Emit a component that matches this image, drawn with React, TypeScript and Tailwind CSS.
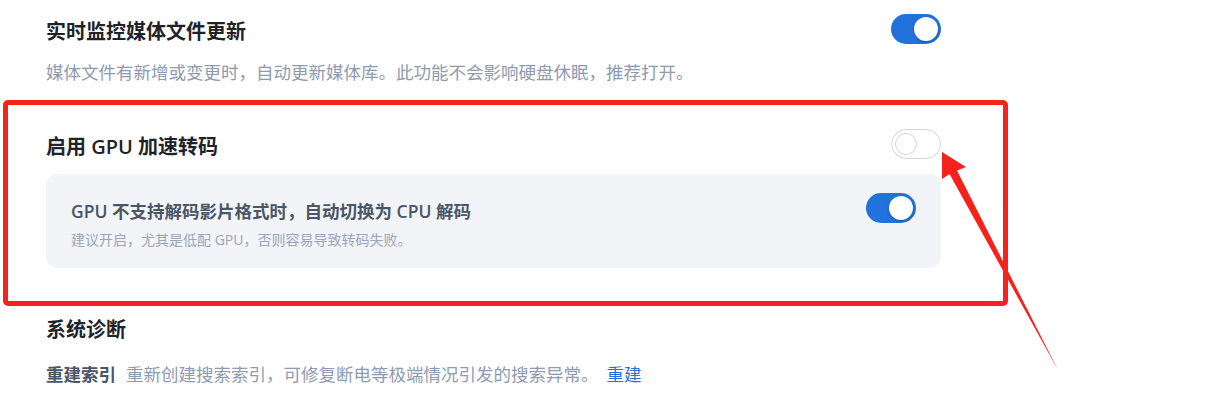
import React from "react";

const font = { fontFamily: '"Open Sans", "Noto Sans CJK SC", sans-serif' };

function Toggle({ on }: { on: boolean }) {
  if (on) {
    return (
      <div className="flex h-[30px] w-[50px] shrink-0 items-center justify-end rounded-full bg-[#2272dc] pr-[3px]">
        <div className="h-[24px] w-[24px] rounded-full bg-white shadow-[0_1px_3px_rgba(0,0,0,0.25)]" />
      </div>
    );
  }
  return (
    <div className="flex h-[30px] w-[50px] shrink-0 items-center rounded-full border border-[#cfd6e0] bg-white pl-[3px]">
      <div className="h-[22px] w-[22px] rounded-full border border-[#cfd6e0] bg-white" />
    </div>
  );
}

export default function App() {
  return (
    <div className="relative h-[411px] w-[1207px] overflow-hidden bg-white" style={font}>
      <div className="flex w-[941px] flex-col pl-[46px] pt-[14px]">
        {/* Section 1 */}
        <div className="flex h-[30px] items-center justify-between">
          <div className="pt-[5px] text-[20px] font-semibold leading-[28px] text-[#1f2329]">实时监控媒体文件更新</div>
          <Toggle on />
        </div>
        <div className="mt-[15px] text-[17.5px] leading-[26px] text-[#8e9aae]">
          媒体文件有新增或变更时，自动更新媒体库。此功能不会影响硬盘休眠，推荐打开。
        </div>

        {/* Section 2 */}
        <div className="mt-[44px] flex h-[30px] items-center justify-between">
          <div className="pt-[5px] text-[20px] font-semibold leading-[28px] text-[#1f2329]">启用 GPU 加速转码</div>
          <Toggle on={false} />
        </div>
        <div className="mt-[15px] flex flex-col rounded-[12px] bg-[#f2f4f7] px-[25px] pb-[17px] pt-[19px]">
          <div className="flex h-[30px] items-center justify-between">
            <div className="pt-[5px] text-[17.5px] font-semibold leading-[26px] text-[#4a5566]">
              GPU 不支持解码影片格式时，自动切换为 CPU 解码
            </div>
            <Toggle on />
          </div>
          <div className="mt-[6px] text-[14px] leading-[22px] text-[#9aa5b8]">
            建议开启，尤其是低配 GPU，否则容易导致转码失败。
          </div>
        </div>

        {/* Section 3 */}
        <div className="mt-[48px] text-[20px] font-semibold leading-[28px] text-[#1f2329]">系统诊断</div>
        <div className="mt-[17px] flex items-center text-[17.5px] leading-[26px]">
          <span className="font-semibold text-[#4a5566]">重建索引</span>
          <span className="ml-[10px] text-[#8e9aae]">重新创建搜索索引，可修复断电等极端情况引发的搜索异常。</span>
          <span className="ml-[8px] text-[#2a6fd6]">重建</span>
        </div>
      </div>

      {/* Annotation overlay */}
      <div className="pointer-events-none absolute left-[3px] top-[100px] h-[206px] w-[1005px] rounded-[5px] border-[5px] border-[#f5231c]" />
      <svg className="pointer-events-none absolute left-0 top-0" width="1207" height="411" viewBox="0 0 1207 411">
        <polygon
          points="942,152 966,167 957,170.5 1058,370 949.5,174 942,179"
          fill="#f5231c"
        />
      </svg>
    </div>
  );
}
